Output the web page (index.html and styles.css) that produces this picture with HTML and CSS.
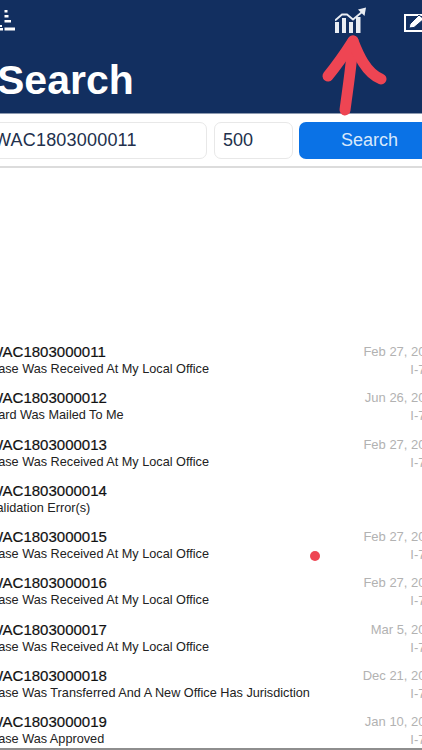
FILE: index.html
```html
<!DOCTYPE html>
<html lang="en">
<head>
  <meta charset="UTF-8" />
  <meta name="viewport" content="width=device-width, initial-scale=1.0"/>
  <title>Search</title>
  <link rel="stylesheet" href="styles.css">
</head>
<body>
  <div class="screen">
    <div class="app">
      <header class="top-bar">
        <div class="icon-row">
          <svg class="icon-list" width="15" height="21" viewBox="0 0 15 21" fill="#fff">
            <rect x="4.5" y="0" width="3" height="2.5"/>
            <rect x="4.5" y="5" width="4" height="2.5"/>
            <rect x="4.5" y="10" width="6.5" height="2.5"/>
            <rect x="4.5" y="17.5" width="10.5" height="3"/>
            <rect x="0" y="15" width="2" height="2"/>
            <rect x="0" y="18" width="3" height="2.5"/>
          </svg>
          <svg class="icon-chart" width="32" height="27" viewBox="0 0 32 27" fill="#e9edf3">
            <rect x="0" y="15" width="4" height="11"/>
            <rect x="7" y="11" width="4" height="15"/>
            <rect x="14" y="15" width="4" height="11"/>
            <rect x="21" y="10" width="4.5" height="16"/>
            <path d="M0 13.5 L7 7.5 L12 7.5 L18 12.5 L27 5" fill="none" stroke="#e9edf3" stroke-width="1.8"/>
            <path d="M23 2.5 L31 0.5 L29.5 9 Z"/>
          </svg>
          <svg class="icon-edit" width="22" height="20" viewBox="0 0 22 20">
            <rect x="2" y="2" width="18" height="16" fill="none" stroke="#fff" stroke-width="2"/>
            <path d="M6 15 L7 11 L16 2 L21 6 L11 14.5 Z" fill="#fff" stroke="#122f60"/>
          </svg>
        </div>
        <h1>Search</h1>
      </header>

      <form class="search-bar">
        <input class="field field-receipt" type="text" value="WAC1803000011" />
        <input class="field field-limit" type="text" value="500" />
        <button type="button" class="search-btn">Search</button>
      </form>

      <ul class="case-list">
        <li class="case-row">
          <div class="case-main"><strong>WAC1803000011</strong><span>Case Was Received At My Local Office</span></div>
          <div class="case-meta"><span>Feb 27, 2018</span><span>I-765</span></div>
        </li>
        <li class="case-row">
          <div class="case-main"><strong>WAC1803000012</strong><span>Card Was Mailed To Me</span></div>
          <div class="case-meta"><span>Jun 26, 2018</span><span>I-765</span></div>
        </li>
        <li class="case-row">
          <div class="case-main"><strong>WAC1803000013</strong><span>Case Was Received At My Local Office</span></div>
          <div class="case-meta"><span>Feb 27, 2018</span><span>I-765</span></div>
        </li>
        <li class="case-row">
          <div class="case-main"><strong>WAC1803000014</strong><span>Validation Error(s)</span></div>
        </li>
        <li class="case-row">
          <div class="case-main"><strong>WAC1803000015</strong><span>Case Was Received At My Local Office</span></div>
          <div class="case-meta"><span>Feb 27, 2018</span><span>I-765</span></div>
        </li>
        <li class="case-row">
          <div class="case-main"><strong>WAC1803000016</strong><span>Case Was Received At My Local Office</span></div>
          <div class="case-meta"><span>Feb 27, 2018</span><span>I-765</span></div>
        </li>
        <li class="case-row">
          <div class="case-main"><strong>WAC1803000017</strong><span>Case Was Received At My Local Office</span></div>
          <div class="case-meta"><span>Mar 5, 2018</span><span>I-765</span></div>
        </li>
        <li class="case-row">
          <div class="case-main"><strong>WAC1803000018</strong><span>Case Was Transferred And A New Office Has Jurisdiction</span></div>
          <div class="case-meta"><span>Dec 21, 2017</span><span>I-765</span></div>
        </li>
        <li class="case-row">
          <div class="case-main"><strong>WAC1803000019</strong><span>Case Was Approved</span></div>
          <div class="case-meta"><span>Jan 10, 2018</span><span>I-765</span></div>
        </li>
      </ul>
    </div>

    <!-- hand drawn marks on top of the screenshot -->
    <svg class="red-arrow" width="70" height="90" viewBox="0 0 70 90" fill="none" stroke="#ee4553" stroke-width="11" stroke-linecap="round" stroke-linejoin="round">
      <path d="M33 9 C32 30 28 55 25 78"/>
      <path d="M8 44 C17 33 26 20 33 9 C38 22 46 41 61 47"/>
    </svg>
    <span class="red-dot"></span>
  </div>
</body>
</html>
```

FILE: styles.css
```css
body {
  margin: 0;
  background: #ffffff;
  font-family: 'Liberation Sans', Arial, sans-serif;
}

.screen {
  position: relative;
  width: 422px;
  height: 750px;
  overflow: hidden;
}

/* the picture is zoomed in, so the app runs past both edges */
.app {
  width: 452px;
  height: 748px;
  margin-left: -12px;
  border-bottom: 2px solid #8e8e8e;
}

.top-bar {
  height: 114px;
  background-color: #122f60;
  box-sizing: border-box;
  border-bottom: 1px solid #8d9ab0;
  overflow: hidden;
}

.icon-row {
  display: flex;
  align-items: flex-start;
  height: 50px;
}

.icon-list {
  margin: 10px 0 0 12px;
}

.icon-chart {
  margin: 7px 0 0 320px;
}

.icon-edit {
  margin: 13px 0 0 36px;
}

.top-bar h1 {
  margin: 6px 0 0 9px;
  font-size: 41px;
  line-height: 48px;
  color: #ffffff;
}

.search-bar {
  display: flex;
  gap: 7px;
  height: 37px;
  padding: 8px 0 7px 0;
  border-bottom: 2px solid #dcdcdc;
}

.field {
  box-sizing: border-box;
  height: 37px;
  border: 1px solid #e8e8e8;
  border-radius: 7px;
  font-family: inherit;
  font-size: 18px;
  color: #22304c;
  background: #ffffff;
  outline: none;
}

.field-receipt {
  width: 219px;
  padding: 0 0 0 5px;
  letter-spacing: 0.2px;
}

.field-limit {
  width: 79px;
  padding: 0 0 0 8px;
}

.search-btn {
  flex: 1;
  height: 37px;
  margin-left: -1px;
  padding: 0;
  border: none;
  border-radius: 7px;
  background-color: #0a72e6;
  color: #d8e8fb;
  font-family: inherit;
  font-size: 18px;
}

.case-list {
  list-style: none;
  margin: 0;
  padding: 175px 0 0 0;
}

.case-row {
  display: flex;
  justify-content: space-between;
  height: 46.3px;
}

.case-main {
  display: flex;
  flex-direction: column;
  margin-left: 1px;
}

.case-main strong {
  font-size: 15px;
  font-weight: 500;
  line-height: 18px;
  color: #111111;
  -webkit-text-stroke: 0.2px #111111;
}

.case-main span {
  font-size: 12.7px;
  line-height: 17px;
  color: #222222;
}

.case-meta {
  display: flex;
  flex-direction: column;
  align-items: flex-end;
  font-size: 13px;
  color: #b2b2b2;
}

.case-meta span {
  line-height: 18px;
}

.red-arrow {
  position: absolute;
  left: 320px;
  top: 32px;
}

.red-dot {
  position: absolute;
  left: 310px;
  top: 551px;
  width: 10px;
  height: 10px;
  border-radius: 50%;
  background-color: #ee4553;
}
```
